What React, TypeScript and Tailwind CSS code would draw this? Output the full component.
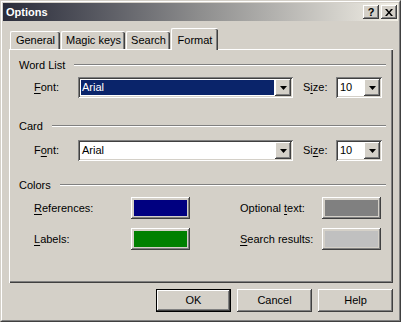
import React from "react";

const raised =
  "shadow-[inset_-1px_-1px_0_#404040,inset_1px_1px_0_#ffffff,inset_-2px_-2px_0_#808080,inset_2px_2px_0_#d4d0c8]";
const sunken =
  "shadow-[inset_1px_1px_0_#808080,inset_-1px_-1px_0_#ffffff,inset_2px_2px_0_#404040,inset_-2px_-2px_0_#d4d0c8]";

function U({ c }: { c: string }) {
  return <span className="underline underline-offset-[2px]">{c}</span>;
}

function Arrow() {
  return (
    <svg width="7" height="4" viewBox="0 0 7 4">
      <path d="M0 0h7L3.5 4z" fill="#000" />
    </svg>
  );
}

function Combo({ value, className, selected }: { value: string; className: string; selected?: boolean }) {
  return (
    <div className={`flex h-[21px] p-[2px] bg-white ${sunken} ${className}`}>
      <div className="flex-1 p-[1px]">
        <div className={`h-full pl-[1px] leading-[15px] ${selected ? "bg-[#0a246a] text-white" : "text-black"}`}>{value}</div>
      </div>
      <div className={`w-[16px] h-full bg-[#d4d0c8] flex items-center justify-center ${raised}`}>
        <Arrow />
      </div>
    </div>
  );
}

function Heading({ label }: { label: string }) {
  return (
    <div className="flex items-center h-[14px] pl-[9px] pr-[6px]">
      <span className="leading-[14px]">{label}</span>
      <div className="flex-1 ml-[9px] h-[2px] border-t border-b border-t-[#808080] border-b-white" />
    </div>
  );
}

function FontRow({ font, size, selected }: { font: React.ReactNode; size: React.ReactNode; selected?: boolean }) {
  return (
    <div className="flex items-center h-[21px] pl-[24px]">
      <span className="w-[44px]">{font}</span>
      <Combo value="Arial" className="w-[215px]" selected={selected} />
      <span className="w-[33px] ml-[10px]">{size}</span>
      <Combo value="10" className="w-[46px]" />
    </div>
  );
}

function Swatch({ color }: { color: string }) {
  return (
    <div className={`w-[59px] h-[22px] p-[3px] bg-[#d4d0c8] ${raised}`}>
      <div className={`h-full ${color}`} />
    </div>
  );
}

function Button({ label, isDefault }: { label: string; isDefault?: boolean }) {
  return (
    <div className={`w-[75px] h-[23px] ${isDefault ? "border border-black" : ""}`}>
      <div className={`h-full flex items-center justify-center bg-[#d4d0c8] ${raised}`}>{label}</div>
    </div>
  );
}

export default function App() {
  const tabs = [
    ["General", "w-[50px]"],
    ["Magic keys", "w-[64px]"],
    ["Search", "w-[44px]"],
  ];
  return (
    <div
      className="w-[401px] h-[322px] bg-[#d4d0c8] text-[11px] text-black border-t border-l border-t-[#d4d0c8] border-l-[#d4d0c8] border-r border-b border-r-[#404040] border-b-[#404040]"
      style={{ fontFamily: '"Liberation Sans", Arial, sans-serif' }}
    >
      <div className="h-full border-t border-l border-white border-r border-b border-r-[#808080] border-b-[#808080] p-[1px] flex flex-col">
        {/* title bar */}
        <div className="h-[18px] flex items-center bg-gradient-to-r from-[#2a2c3a] via-[#8e8e8e] to-[#f3f0e7] pl-[3px] pr-[1px]">
          <span className="flex-1 font-bold text-white leading-[18px]">Options</span>
          <div className={`w-[16px] h-[14px] bg-[#d4d0c8] flex items-center justify-center font-bold text-[11px] leading-none ${raised}`}>?</div>
          <div className={`w-[16px] h-[14px] ml-[2px] bg-[#d4d0c8] flex items-center justify-center ${raised}`}>
            <svg width="8" height="7" viewBox="0 0 8 7">
              <path d="M0 0h2l2 2.5L6 0h2L5 3.5 8 7H6L4 4.5 2 7H0l3-3.5z" fill="#000" />
            </svg>
          </div>
        </div>

        {/* tabs */}
        <div className="flex items-end h-[28px] pl-[7px]">
          {tabs.map(([t, w]) => (
            <div
              key={t}
              className={`${w} h-[18px] mr-[1px] rounded-t-[2px] border-t border-l border-white shadow-[inset_-1px_0_0_#404040,inset_-2px_0_0_#808080] flex items-center justify-center`}
            >
              {t}
            </div>
          ))}
          <div className="relative z-10 w-[47px] h-[22px] -mb-[1px] rounded-t-[2px] border-t border-l border-white bg-[#d4d0c8] shadow-[inset_-1px_0_0_#404040,inset_-2px_0_0_#808080] flex items-start justify-center pt-[3px]">
            Format
          </div>
        </div>

        {/* panel */}
        <div className="ml-[6px] mr-[5px] h-[234px] border-t border-l border-white shadow-[inset_-1px_-1px_0_#404040,inset_-2px_-2px_0_#808080] flex flex-col pt-[8px] pr-[1px]">
          <Heading label="Word List" />
          <div className="mt-[5px]">
            <FontRow font={<><U c="F" />ont:</>} size={<>S<U c="i" />ze:</>} selected />
          </div>
          <div className="mt-[21px]">
            <Heading label="Card" />
          </div>
          <div className="mt-[7px]">
            <FontRow font={<>F<U c="o" />nt:</>} size={<>Si<U c="z" />e:</>} />
          </div>
          <div className="mt-[17px]">
            <Heading label="Colors" />
          </div>
          <div className="mt-[5px] flex items-center pl-[24px]">
            <span className="w-[97px]">
              <U c="R" />eferences:
            </span>
            <Swatch color="bg-[#000080]" />
            <span className="w-[82px] ml-[50px]">
              Optional <U c="t" />ext:
            </span>
            <Swatch color="bg-[#808080]" />
          </div>
          <div className="mt-[9px] flex items-center pl-[24px]">
            <span className="w-[97px]">
              <U c="L" />abels:
            </span>
            <Swatch color="bg-[#008000]" />
            <span className="w-[82px] ml-[50px]">
              <U c="S" />earch results:
            </span>
            <Swatch color="bg-[#c0c0c0]" />
          </div>
        </div>

        {/* buttons */}
        <div className="flex justify-end gap-[6px] mt-[6px] pr-[5px]">
          <Button label="OK" isDefault />
          <Button label="Cancel" />
          <Button label="Help" />
        </div>
      </div>
    </div>
  );
}
